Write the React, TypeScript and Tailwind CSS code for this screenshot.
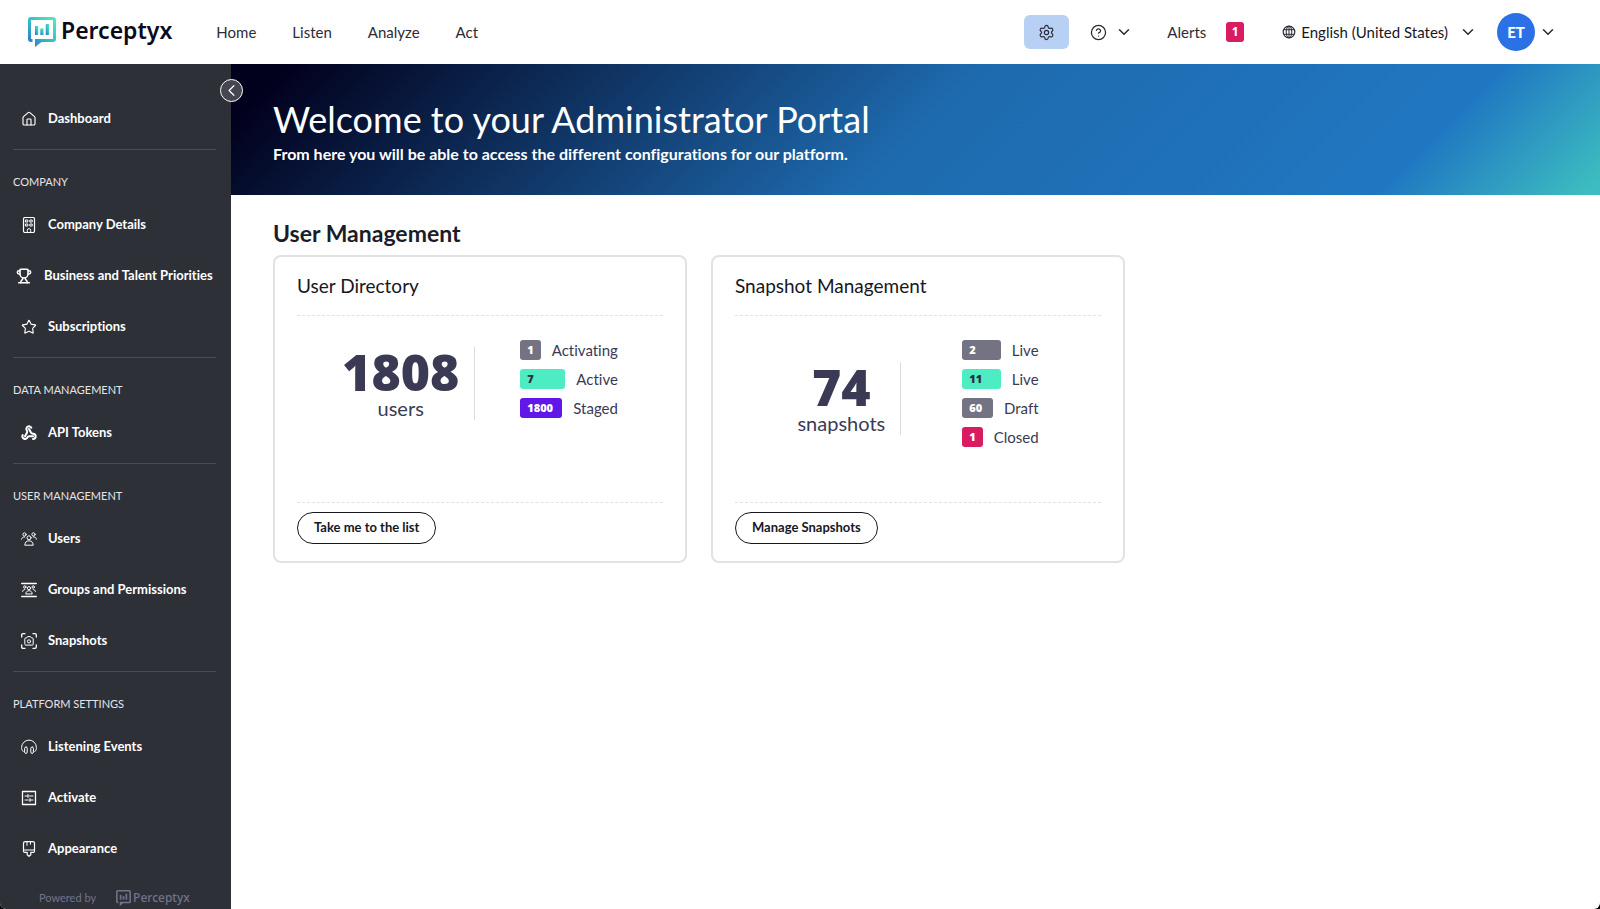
import type { ReactNode } from "react";
import { ChevronDown, ChevronLeft, CircleHelp, House, Settings, Star, Trophy, Webhook } from "lucide-react";

type NavItem = {
    label: string;
    icon: ReactNode;
    wide?: boolean;
};

type NavSection = {
    title: string;
    items: NavItem[];
};

type Status = {
    count: number;
    label: string;
    badge: string;
};

type StatCardProps = {
    title: string;
    total: number;
    unit: string;
    statuses: Status[];
    action: string;
    spacing: string;
};

const LineIcon = ({ children }: { children: ReactNode }) => (
    <svg viewBox="0 0 16 16" className="w-4 h-4" fill="none" stroke="currentColor" strokeLinecap="round" strokeLinejoin="round" aria-hidden="true">
        {children}
    </svg>
);

const BuildingIcon = () => (
    <LineIcon>
        <rect x="2.5" y="0.5" width="11" height="15" rx="1.5" strokeWidth="1.2" />
        <rect x="4.8" y="3" width="2" height="2" />
        <rect x="9.2" y="3" width="2" height="2" />
        <rect x="4.8" y="7" width="2" height="2" />
        <rect x="9.2" y="7" width="2" height="2" />
        <path d="M6.3 15.5v-2.2a1.7 1.7 0 0 1 3.4 0v2.2" />
    </LineIcon>
);

const UsersIcon = () => (
    <LineIcon>
        <circle cx="8" cy="6.8" r="2" />
        <path d="M3.8 13.8c.2-2.6 1.8-4 4.2-4s4 1.4 4.2 4z" />
        <circle cx="3.5" cy="3.4" r="1.6" />
        <circle cx="12.5" cy="3.4" r="1.6" />
        <path d="M.6 8.200c.3-1.700 1.400-2.500 3.200-2.300M15.400 8.200c-.3-1.700-1.400-2.500-3.200-2.300" />
    </LineIcon>
);

const GroupsIcon = () => (
    <LineIcon>
        <path d="M.7 1.500h14.600M.7 14.500h14.600" strokeWidth="1.4" />
        <circle cx="8" cy="6.2" r="1.6" />
        <path d="M4.800 11.600c.2-1.900 1.400-2.900 3.200-2.900s3 1 3.200 2.900z" />
        <circle cx="3.8" cy="5" r="1.2" />
        <circle cx="12.2" cy="5" r="1.2" />
        <path d="M1.600 9.400c.2-1.200 1-1.900 2.200-1.900M14.400 9.400c-.2-1.200-1-1.900-2.200-1.900" />
    </LineIcon>
);

const SnapshotIcon = () => (
    <LineIcon>
        <path d="M.7 4V2Q.7.7 2 .7h2M12 .7h2q1.300 0 1.300 1.300v2M15.300 12v2q0 1.300-1.300 1.300h-2M4 15.300H2Q.7 15.300.7 14v-2" strokeWidth="1.3" />
        <path d="M3.800 5.800q0-.9.9-.9h1L6.500 3.600h3l.8 1.300h1q.9 0 .9.900v5.400q0 .9-.9.900H4.700q-.9 0-.9-.9z" />
        <circle cx="8" cy="8.4" r="1.6" />
    </LineIcon>
);

const HeadphonesIcon = () => (
    <LineIcon>
        <path d="M2.200 12.600C.9 11.600.6 10 .6 8.500a7.400 7.400 0 0 1 14.800 0c0 1.500-.3 3.100-1.600 4.100" />
        <rect x="3.600" y="8" width="2.600" height="6.400" rx="1.300" />
        <rect x="9.800" y="8" width="2.600" height="6.400" rx="1.300" />
    </LineIcon>
);

const SlidersIcon = () => (
    <LineIcon>
        <rect x="1.5" y="1.5" width="13" height="13" strokeWidth="1.3" />
        <path d="M4 6h3M8.500 6H12M7 4.500v3M4 10h3.500M9 10h3M9 8.500v3" />
    </LineIcon>
);

const BrushIcon = () => (
    <LineIcon>
        <path d="M2.500 9V2.200Q2.500.6 4.100.6h7.800q1.600 0 1.600 1.600V9zM2.500 9v1.200q0 1.200 1.200 1.200h2.500v2.300l1.800 1.700 1.800-1.700v-2.300h2.500q1.200 0 1.200-1.200V9" strokeWidth="1.2" />
        <path d="M6 .8v3.600M9.500.8v2.400" />
    </LineIcon>
);

const GlobeIcon = () => (
    <svg viewBox="0 0 14 14" className="w-[14px] h-[14px]" fill="none" stroke="currentColor" aria-hidden="true">
        <circle cx="7" cy="7" r="5.8" strokeWidth="1.2" />
        <ellipse cx="7" cy="7" rx="2.8" ry="5.8" />
        <path d="M7 1v12M1.600 4.700h10.800M1.600 9.300h10.800" />
    </svg>
);

const LogoMark = ({ className, color }: { className: string; color?: string }) => (
    <svg viewBox="0 0 28 30" className={className} aria-hidden="true">
        <defs>
            <linearGradient id="logo-gradient" x1="0" y1="1" x2="0.9" y2="0">
                <stop offset="0.1" stopColor="#2a7fcb" />
                <stop offset="0.5" stopColor="#36b9c9" />
                <stop offset="1" stopColor="#4debc1" />
            </linearGradient>
        </defs>
        <g fill={color ?? "url(#logo-gradient)"}>
            <path fillRule="evenodd" d="M3 0h22q3 0 3 3v19q0 3-3 3H13.500L7 30v-8h18V3H3v19h1.500v3H3q-3 0-3-3V3q0-3 3-3z" />
            <rect x="7" y="9" width="3.2" height="9" />
            <rect x="12.4" y="11.5" width="3.2" height="6.5" />
            <rect x="17.8" y="7" width="3.2" height="11" />
        </g>
    </svg>
);

const sections: NavSection[] = [
    {
        title: "COMPANY",
        items: [
            { label: "Company Details", icon: <BuildingIcon /> },
            { label: "Business and Talent Priorities", icon: <Trophy className="w-4 h-4" strokeWidth={2.3} />, wide: true },
            { label: "Subscriptions", icon: <Star className="w-4 h-4" strokeWidth={1.7} /> },
        ],
    },
    {
        title: "DATA MANAGEMENT",
        items: [{ label: "API Tokens", icon: <Webhook className="w-4 h-4" strokeWidth={3} /> }],
    },
    {
        title: "USER MANAGEMENT",
        items: [
            { label: "Users", icon: <UsersIcon /> },
            { label: "Groups and Permissions", icon: <GroupsIcon /> },
            { label: "Snapshots", icon: <SnapshotIcon /> },
        ],
    },
    {
        title: "PLATFORM SETTINGS",
        items: [
            { label: "Listening Events", icon: <HeadphonesIcon /> },
            { label: "Activate", icon: <SlidersIcon /> },
            { label: "Appearance", icon: <BrushIcon /> },
        ],
    },
];

const userStatuses: Status[] = [
    { count: 1, label: "Activating", badge: "bg-[#737384] text-white" },
    { count: 7, label: "Active", badge: "bg-[#4eecc3] text-[#2b2b3c]" },
    { count: 1800, label: "Staged", badge: "bg-[#6017e8] text-white" },
];

const snapshotStatuses: Status[] = [
    { count: 2, label: "Live", badge: "bg-[#737384] text-white" },
    { count: 11, label: "Live", badge: "bg-[#4eecc3] text-[#2b2b3c]" },
    { count: 60, label: "Draft", badge: "bg-[#737384] text-white" },
    { count: 1, label: "Closed", badge: "bg-[#d91b62] text-white" },
];

const SidebarLink = ({ label, icon, wide }: NavItem) => (
    <a href="#" className={`h-[51px] flex items-center whitespace-nowrap text-[13px] font-bold text-white ${wide ? "pl-4 gap-3" : "pl-[21px] gap-[11px]"}`}>
        {icon}
        {label}
    </a>
);

const Header = () => (
    <header className="h-16 flex items-center justify-between pl-7 pr-[43px] bg-white text-[15px] text-[#2b2b38]">
        <div className="flex items-center">
            <a href="#" className="flex items-center gap-[5px]">
                <LogoMark className="w-7 h-[30px]" />
                <span className="font-['Noto_Sans'] text-[23px] leading-7 pb-1 font-semibold text-[#0a0a1e]">Perceptyx</span>
            </a>
            <nav className="flex gap-9 ml-11">
                <a href="#">Home</a>
                <a href="#">Listen</a>
                <a href="#">Analyze</a>
                <a href="#">Act</a>
            </nav>
        </div>

        <div className="flex items-center">
            <button aria-label="Settings" className="w-[45px] h-[34px] grid place-items-center rounded-md bg-[#b9d0f5]">
                <Settings className="w-[17px] h-[17px]" strokeWidth={1.7} />
            </button>
            <button aria-label="Help" className="flex items-center gap-2 ml-[21px]">
                <CircleHelp className="w-[17px] h-[17px]" strokeWidth={1.8} />
                <ChevronDown className="w-[18px] h-[18px]" />
            </button>
            <a href="#" className="flex items-center gap-5 ml-[34px]">
                Alerts
                <span className="w-[18px] h-5 grid place-items-center rounded-[3px] bg-[#d91b62] font-['Open_Sans'] text-xs font-bold text-white">1</span>
            </a>
            <button className="flex items-center ml-[38px]">
                <GlobeIcon />
                <span className="ml-[5px] mr-[11px] text-[#17171f]">English (United States)</span>
                <ChevronDown className="w-[18px] h-[18px]" />
            </button>
            <button aria-label="Account" className="flex items-center gap-1 ml-5">
                <span className="w-[38px] h-[38px] grid place-items-center rounded-full bg-[#2b70e4] text-[15px] font-black text-white">ET</span>
                <ChevronDown className="w-[18px] h-[18px]" />
            </button>
        </div>
    </header>
);

const Sidebar = () => (
    <aside className="relative w-[231px] shrink-0 pt-[29px] bg-[#2e3038]">
        <button aria-label="Collapse menu" className="absolute top-[15px] -right-3 w-[23px] h-[23px] grid place-items-center rounded-full border border-white bg-[#45464f] text-white">
            <ChevronLeft className="w-[19px] h-[19px]" strokeWidth={1.5} />
        </button>

        <SidebarLink label="Dashboard" icon={<House className="w-4 h-4" strokeWidth={1.7} />} />

        {sections.map(section => (
            <div key={section.title} className="pt-[5px]">
                <h2 className="h-[50px] ml-[13px] mr-[15px] pt-6 border-t border-[#4a4b54] text-[11px] leading-4 text-[#e4e4e8]">{section.title}</h2>
                {section.items.map(item => <SidebarLink key={item.label} {...item} />)}
            </div>
        ))}

        <div className="flex items-center gap-5 pl-[39px] pt-4 text-[11px] leading-4 text-[#72738a]">
            Powered by
            <span className="flex items-center gap-[2px] font-['Noto_Sans'] text-xs leading-4 font-medium">
                <LogoMark className="w-[15px] h-4" color="#72738a" />
                Perceptyx
            </span>
        </div>
    </aside>
);

const StatCard = ({ title, total, unit, statuses, action, spacing }: StatCardProps) => (
    <section className="w-[414px] h-[308px] px-[22px] border-2 border-[#e2e2e4] rounded-lg">
        <h3 className="h-[59px] pt-[17px] border-b border-dashed border-[#e2e2e4] text-[19px] leading-6 text-[#17171f]">{title}</h3>

        <div className="h-[187px] flex justify-center items-start pt-6 text-[#3a3a54] border-b border-dashed border-[#e2e2e4]">
            <div className="flex items-center">
                <div className="h-[73px] pr-[15px] border-r border-[#dcdce0] text-center">
                    <p className="font-['Open_Sans'] text-[50px] leading-[50px] font-extrabold">{total}</p>
                    <p className="text-xl leading-[22px]">{unit}</p>
                </div>
                <ul className={spacing}>
                    {statuses.map((status, index) => (
                        <li key={index} className="flex gap-[11px] mb-[9px] text-[15px] leading-5">
                            <span className={`grow px-[7px] rounded-[3px] font-['Open_Sans'] text-[11px] leading-5 font-extrabold ${status.badge}`}>{status.count}</span>
                            {status.label}
                        </li>
                    ))}
                </ul>
            </div>
        </div>

        <button className="h-8 mt-[9px] px-4 rounded-full border border-[#17171f] text-[13px] font-bold text-[#17171f]">{action}</button>
    </section>
);

const App = () => {
    return (
        <div className="min-h-screen bg-black font-['Lato',sans-serif] [font-variant-ligatures:none]">
            <div className="min-h-screen flex flex-col bg-white rounded-b-md overflow-hidden">
                <Header />
                <div className="grow flex">
                    <Sidebar />
                    <main className="grow">
                        <div className="h-[131px] pl-[42px] pt-[33px] text-white bg-[linear-gradient(135deg,#02011d_4%,#1e6aae_50%,#2077c1_85%,#3dbdc0_99%)]">
                            <h1 className="text-[36px] leading-[45px] font-normal">Welcome to your Administrator Portal</h1>
                            <p className="text-base leading-6 font-bold">From here you will be able to access the different configurations for our platform.</p>
                        </div>

                        <div className="pl-[42px] pt-6">
                            <h2 className="text-[23px] leading-7 font-bold text-[#1c1c28]">User Management</h2>
                            <div className="flex gap-6 mt-2">
                                <StatCard title="User Directory" total={1808} unit="users" statuses={userStatuses} action="Take me to the list" spacing="ml-[45px]" />
                                <StatCard title="Snapshot Management" total={74} unit="snapshots" statuses={snapshotStatuses} action="Manage Snapshots" spacing="ml-[61px]" />
                            </div>
                        </div>
                    </main>
                </div>
            </div>
        </div>
    );
};

export default App;
